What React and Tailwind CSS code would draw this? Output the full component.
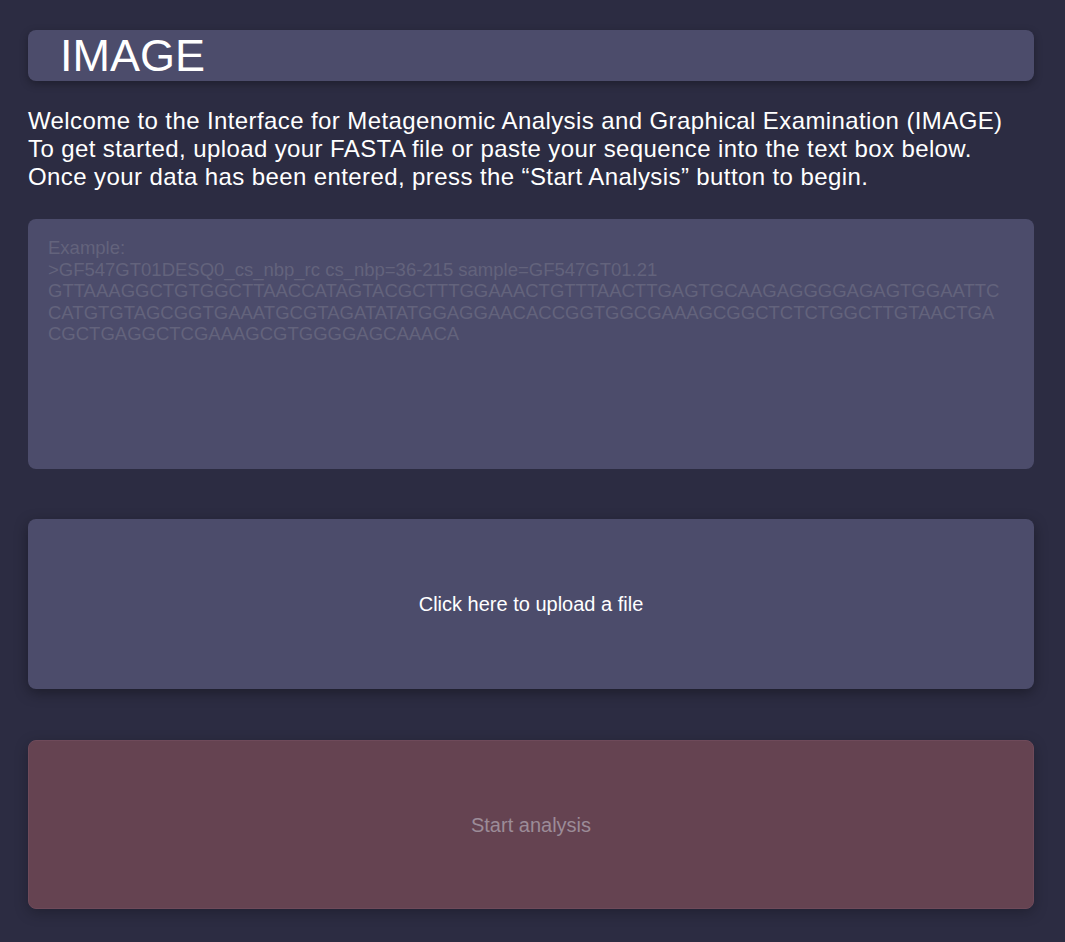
import { useState } from "react";

const placeholder = `Example:
>GF547GT01DESQ0_cs_nbp_rc cs_nbp=36-215 sample=GF547GT01.21
GTTAAAGGCTGTGGCTTAACCATAGTACGCTTTGGAAACTGTTTAACTTGAGTGCAAGAGGGGAGAGTGGAATTC
CATGTGTAGCGGTGAAATGCGTAGATATATGGAGGAACACCGGTGGCGAAAGCGGCTCTCTGGCTTGTAACTGA
CGCTGAGGCTCGAAAGCGTGGGGAGCAAACA`;

export default function App() {
  const [seq, setSeq] = useState("");

  return (
    <div className="min-h-screen bg-[#2c2c42] pl-[28px] pr-[31px] pt-[30px] pb-[33px] font-['Liberation_Sans',Arial,sans-serif] text-white">
      {/* Header */}
      <div className="h-[51px] rounded-lg bg-[#4c4c6b] pl-[32px] shadow-[0_3px_8px_rgba(0,0,0,0.3)] flex items-center">
        <h1 className="text-[45px] leading-none">IMAGE</h1>
      </div>

      {/* Intro */}
      <p className="mt-[26px] text-[24px] leading-[28px] tracking-[0.4px]">
        Welcome to the Interface for Metagenomic Analysis and Graphical Examination (IMAGE)
        <br />
        To get started, upload your FASTA file or paste your sequence into the text box below.
        <br />
        Once your data has been entered, press the “Start Analysis” button to begin.
      </p>

      {/* Sequence input */}
      <textarea
        value={seq}
        onChange={(e) => setSeq(e.target.value)}
        placeholder={placeholder}
        className="mt-[28px] block w-full h-[250px] resize-none rounded-lg bg-[#4c4c6b] px-[20px] pt-[18px] pb-[18px] text-[18.5px] leading-[21.5px] text-white placeholder:text-[#63637c] outline-none font-['Liberation_Sans',Arial,sans-serif]"
      />

      {/* Upload */}
      <label className="mt-[50px] h-[170px] rounded-lg bg-[#4c4c6b] shadow-[0_4px_14px_rgba(0,0,0,0.35)] flex items-center justify-center cursor-pointer text-[20px]">
        Click here to upload a file
        <input type="file" className="hidden" />
      </label>

      {/* Start */}
      <button className="mt-[51px] w-full h-[169px] rounded-lg bg-[#654351] border border-[#6e4a5a] shadow-[0_4px_14px_rgba(0,0,0,0.25)] text-[20px] text-[#9c8c98] font-['Liberation_Sans',Arial,sans-serif]">
        Start analysis
      </button>
    </div>
  );
}
